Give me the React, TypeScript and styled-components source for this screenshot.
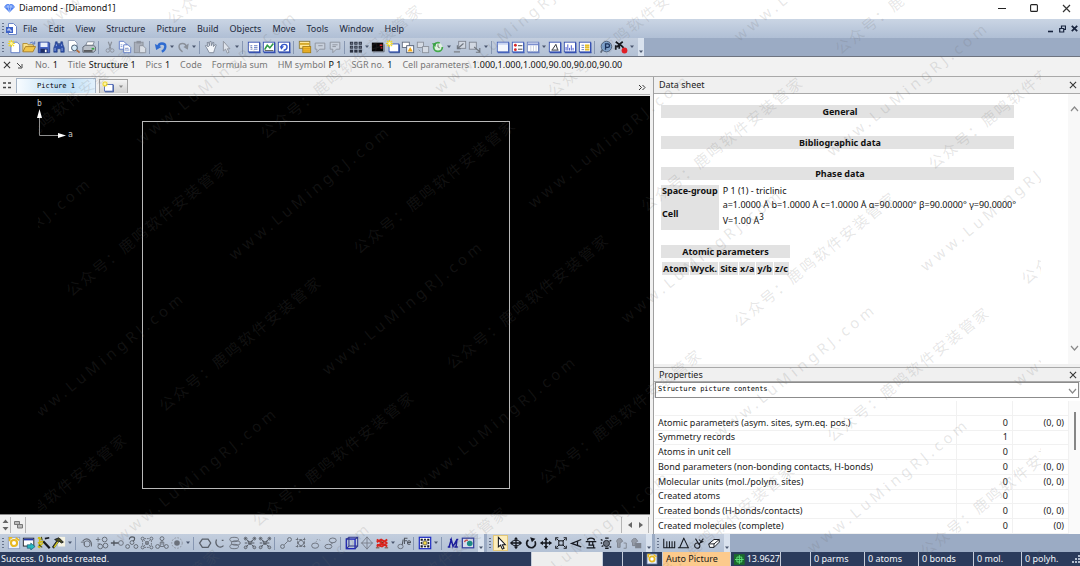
import React from "react";
import styled, { createGlobalStyle, css } from "styled-components";

const ui = `"Noto Sans", "Open Sans", "Noto Sans CJK SC", sans-serif`;
const mono = `"DejaVu Sans Mono", "Liberation Mono", monospace`;

const Global = createGlobalStyle`
  *, *::before, *::after { box-sizing: border-box; }
  html, body, #root { height: 100%; }
  body { margin: 0; overflow: hidden; font: 9px/12px ${ui}; color: #1c1c1c; background: #f0f0f0; }
  button, select { font: inherit; color: inherit; margin: 0; padding: 0; border: 0; background: none; }
  svg { display: block; }
`;

/* ---------- icons ---------- */

const B = "#3550b0";
const N = "#1f3f8f";
const G = "#8a909a";
const Y = "#f5d94a";
const K = "#15181f";

const Win = ({ c = B, fill = "#fff" }: { c?: string; fill?: string }) => (
  <>
    <rect x="1.5" y="2.5" width="13" height="11" fill={fill} stroke={c} />
    <path d="M2 14.5h13.5M14.5 3v11" stroke={c} strokeWidth="1.5" fill="none" />
  </>
);
const Star = ({ x = 4, y = 4 }: { x?: number; y?: number }) => (
  <g transform={`translate(${x} ${y})`}>
    <path d="M0-4V4M-4 0H4M-3-3L3 3M-3 3L3-3" stroke="#f2d824" strokeWidth="1.4" />
    <circle r="1.6" fill="#fff6a0" />
  </g>
);
const Page = ({ x = 3, y = 1, w = 10, h = 13, c = "#5674c4", fill = "#fff" }: { x?: number; y?: number; w?: number; h?: number; c?: string; fill?: string }) => (
  <path d={`M${x + 0.5} ${y + 0.5}h${w - 4}l3 3v${h - 4}h-${w - 1}z`} fill={fill} stroke={c} />
);
const Rings = ({ pts, r = 2.2 }: { pts: number[][]; r?: number }) => (
  <>
    {pts.map(([x, y]) => (
      <circle key={`${x}-${y}`} cx={x} cy={y} r={r} fill="none" stroke="#666c76" strokeWidth="1.1" />
    ))}
  </>
);

const art: Record<string, React.ReactNode> = {
  newDoc: <><Page x={4} y={2} w={11} h={13} /><Star x={5} y={4} /></>,
  open: <><path d="M1 13V4h5l1 1.5h6V8" fill="#f7e08a" stroke="#b08a2a" /><path d="M1 13.5L4 7.5h11.5L12.5 13.5z" fill="#f2c64b" stroke="#a87d22" /><path d="M9 3.5q3-2.5 5 .5M14.5 1.5v3h-3" stroke="#5272c0" fill="none" /></>,
  save: <><path d="M1.5 2.5h12l1 1v11h-13z" fill="#4a66c4" stroke="#27408f" /><rect x="4" y="3" width="8" height="5" fill="#e8eefb" /><rect x="4" y="10" width="8" height="4.5" fill="#1d2d66" /><rect x="9" y="11" width="2" height="3" fill="#fff" /></>,
  find: <><path d="M4 2h2v2h1.5v2h1V4H10V2h2l.5 3 1.500 4v5H10v-4H6v4H2V9l1.500-4z" fill="#2d4ea8" stroke="#1b3678" strokeWidth=".6" /><path d="M3.500 9v3.500M11.500 9v3.500M5 5v2M11 5v2" stroke="#9db4ea" /></>,
  preview: <><Page x={1} y={0} w={11} h={14} c="#8594b0" /><circle cx="8.5" cy="9" r="3.3" fill="#d7ebf8" stroke="#33475f" /><path d="M11 11.5l3.5 3" stroke="#b06a3a" strokeWidth="2" /></>,
  print: <><path d="M4 7l2-5h8l-2 5z" fill="#fff" stroke="#7c8797" /><path d="M1 8l3-2h9l2.5 2v4l-2.5 2H1z" fill="#b9bfc8" stroke="#5c6470" /><path d="M2 12.5h10" stroke="#333" strokeWidth="1.5" /><path d="M11 10h3" stroke="#35a745" strokeWidth="2" /></>,
  cut: <><path d="M6 2l3 8M10 2L7 10" stroke={G} strokeWidth="1.3" /><circle cx="5.5" cy="12" r="2" fill="none" stroke={G} /><circle cx="10.5" cy="12" r="2" fill="none" stroke={G} /></>,
  copy: <><Page x={1} y={1} w={9} h={10} /><Page x={6} y={5} w={9} h={10} /><path d="M8 9.5h4M8 11.5h5M3 5.5h2M3 7.5h2" stroke="#7c96da" /></>,
  paste: <><rect x="1.5" y="2.5" width="10" height="12" fill="#a9afba" stroke={G} /><rect x="4" y="1" width="5" height="3" fill="#8b919c" /><Page x={7} y={6} w={8} h={9} c={G} fill="#dadfe6" /></>,
  undo: <><path d="M4.500 8q1-4 4.500-4 4 0 4 3.500 0 3.500-4 6" fill="none" stroke="#2f6bd0" strokeWidth="2.600" /><path d="M1 4.500l1.500 7 6-3.500z" fill="#2f6bd0" /></>,
  redo: <><path d="M12 8q-1-4-4.5-4-4 0-4 3.5 0 3.5 4 6" fill="none" stroke={G} strokeWidth="1.7" /><path d="M14.5 4l-1 7-5-3z" fill={G} /></>,
  hand: <path d="M3 9L1.5 6.5 3 6l2 2-1.5-5L5 2.5l1.5 4V2L8 1.5l.7 5L10 2.5l1.3.5-.5 4.5L13 5l1 .5L12 11l-1 3.5H6z" fill="#f3f6fa" stroke="#788294" />,
  pointerGray: <path d="M5 1.5v11l2.5-2 2 4.5 2-1-2-4h3z" fill="#dfe4ec" stroke={G} />,
  winTable: <><Win /><path d="M4 6.5h2M4 8.5h2M4 10.5h2M8 6.5h4M8 8.5h4M8 10.5h4" stroke="#5a74bd" /></>,
  winGreen: <><Win /><path d="M3 11l3-5 3 3 4-5" stroke="#2e9a45" strokeWidth="1.8" fill="none" /><path d="M3 12h10" stroke="#555" /></>,
  winUndo: <><Win /><path d="M5 8q0-3 3.5-3 3 0 3 3 0 3-4 4" stroke="#3557c9" strokeWidth="1.6" fill="none" /><path d="M3 7l5 0-3 4z" fill="#3557c9" /></>,
  lock: <><rect x="1.5" y="1.5" width="12" height="8" fill="#ffe89a" stroke="#8a7a3a" /><path d="M2 4.5h11" stroke="#d2a525" strokeWidth="2" /><rect x="5.5" y="7.5" width="9" height="7" fill="#f3bd2c" stroke="#a57c12" /><path d="M6 10h8M6 12.5h8" stroke="#d2941a" /></>,
  flagGray: <><path d="M2.5 3.5h11v7h-6l-3 3.5V10.5h-2z" fill="#c8d0dc" stroke={G} /><path d="M6 6.5h5" stroke={G} /></>,
  flagGray2: <><path d="M2.5 2.5h11v8h-4l-4 4v-4h-3z" fill="#c8d0dc" stroke={G} /><path d="M5 5.5h6M5 7.5h4" stroke={G} /></>,
  grid: <>{[1, 6, 11].map((x) => [2, 6.5, 11].map((y) => <rect key={`${x}${y}`} x={x} y={y} width="3.8" height="3.4" fill="#2a3140" />))}<path d="M2 3.7h2M7 3.7h2M12 3.7h2M2 8.2h2M7 8.2h2M12 8.2h2" stroke="#9ba5b7" strokeWidth=".8" /></>,
  blackPic: <><rect x="1" y="3" width="13" height="10" fill="#08080a" /><path d="M2 13.5h13V5" stroke="#60656e" fill="none" /><path d="M10 6h3M11 9h2" stroke="#d4262c" strokeWidth="1.5" /></>,
  newPic: <><rect x="3.5" y="4.5" width="11" height="9" fill="#fff" stroke={B} /><path d="M4 14.5h11.5V5" stroke={N} fill="none" /><Star x={4} y={4} /></>,
  copyPic: <><rect x="1.5" y="2.5" width="8" height="6" fill="#fff" stroke="#606b7d" /><rect x="6.5" y="6.5" width="8" height="8" fill="#fff" stroke="#4d5a70" /><path d="M10.5 8l3 5h-6z" fill="#f0a81c" /></>,
  copyGray: <><rect x="1.5" y="2.5" width="7" height="6" fill="#d5dbe4" stroke={G} /><rect x="7.5" y="7.5" width="7" height="7" fill="#d5dbe4" stroke={G} /><path d="M3 11l2 2" stroke={G} /></>,
  refresh: <><circle cx="8" cy="8" r="5" fill="#dff3df" stroke="#44a94c" strokeWidth="2" strokeDasharray="25 7" /><path d="M1 4l5-1-1 5z" fill="#3aa044" /><path d="M8 5v3l2 1" stroke="#666" fill="none" /></>,
  exportA: <><rect x="6.5" y="1.5" width="8" height="8" fill="#d2d8e2" stroke="#7d838e" /><path d="M12 4L5 10M5 6v4h4" stroke="#70767f" fill="none" strokeWidth="1.3" /><path d="M1 13.5h7" stroke={G} strokeWidth="2" /></>,
  exportB: <><rect x="1.5" y="2.5" width="8" height="8" fill="#d2d8e2" stroke="#7d838e" /><path d="M7 8l6 5M13.5 9v5H9" stroke="#70767f" fill="none" strokeWidth="1.3" /></>,
  winPlain: <><Win c="#4562bb" fill="#f4f7fd" /><path d="M2 4.5h12" stroke="#9bb1e6" /></>,
  winBullets: <><Win c="#4562bb" /><circle cx="5" cy="6" r="1.6" fill="#d92a2a" /><circle cx="5" cy="11" r="1.6" fill="#d92a2a" /><path d="M8 6.5h5M8 10.5h5" stroke="#333" /></>,
  winCols: <><Win c="#6a80c0" /><path d="M2 5h12" stroke="#7b8fd0" strokeWidth="2" /><path d="M5.5 6v7M8.5 6v7M11.5 6v7" stroke="#c6cede" /></>,
  winAngle: <><Win /><path d="M4 11.5h8M5 11l4-6 2 6" stroke={K} fill="none" /></>,
  winBars: <><Win /><path d="M3.5 12V8M5.5 12V5M7.5 12V9M9.5 12V6M11.5 12V9" stroke="#3448c8" /></>,
  winForm: <><Win /><path d="M4 6h3M4 8.5h3M4 11h3" stroke="#5a74bd" /><path d="M8 6h5M8 8.5h5M8 11h5" stroke="#e5bd25" strokeWidth="2" /></>,
  pBall: <><circle cx="8.5" cy="7.5" r="6" fill="#7fa4d0" stroke="#4c5e78" /><path d="M7.5 11V4.5h2.5q2 0 2 2t-2 2H7.5" stroke="#142c58" fill="none" strokeWidth="1.5" /><path d="M4 11l-2 3.5" stroke="#5d6878" strokeWidth="2" /></>,
  tools: <><path d="M2 2l4 3 4-3M3 8l4-3 4 4M2 11V6M6 5v5" stroke={K} strokeWidth="2" fill="none" /><circle cx="12" cy="12" r="3.3" fill="#e01f26" /></>,

  sun: <><rect x="1.5" y="1.5" width="13" height="13" fill="#e9f0fb" stroke="#8b9cc2" /><circle cx="8" cy="8" r="3.5" fill="#fff" stroke="#e8b922" strokeWidth="2.4" /><path d="M10 2l4 3M3 6V2h3" stroke="#e8b922" strokeWidth="2" fill="none" /></>,
  arrowWin: <><rect x="1.5" y="2.5" width="12" height="9" fill="#fff" stroke={K} /><path d="M2 4h11" stroke="#2438a8" strokeWidth="2" /><path d="M6 10h4V8l5 4-5 4v-2H6z" fill="#25b7bd" stroke="#124f72" strokeWidth=".7" /></>,
  wand: <><path d="M7 6l7.5 8" stroke={K} strokeWidth="2.6" /><path d="M9 3l5-1" stroke={K} strokeWidth="2" /><path d="M1 2l4 2M3 1v13M1 8l6-2M1 13l6-5" stroke="#cdbb10" strokeWidth="1.8" /><path d="M5 1l1 4M2 10l4 3" stroke="#4b4b10" strokeWidth="1.2" /></>,
  hammer: <><path d="M7 1h8v11H7z" fill="#f6f4e4" /><path d="M3 4l5-2 5 5-2 1-3-2-6 8-1.5-1.5 5-7z" fill="#494a20" stroke={K} /><path d="M2.5 13l4-6" stroke="#ded224" strokeWidth="1.4" /></>,
  ringA: <><path d="M3 6q3-4 7-2 4 3 3 8" fill="none" stroke="#666c76" strokeWidth="1.3" /><circle cx="8" cy="9" r="3.5" fill="none" stroke="#666c76" /><path d="M1 7h4v4" fill="none" stroke="#666c76" /></>,
  ringB: <><Rings pts={[[11, 4], [6, 12], [12, 11]]} r={2.7} /><path d="M1 4h5M3.5 1.5v5M3 9l3 0" stroke="#666c76" /></>,
  plusO: <><path d="M1 8h9M4.5 5v6" stroke="#50565f" strokeWidth="1.5" /><circle cx="12.5" cy="8" r="2.7" fill="none" stroke="#666c76" /></>,
  tree: <><Rings pts={[[3, 12], [12.5, 12], [8, 7.5]]} /><path d="M5 4q0-3 3-3t3 2-2 3" stroke="#50565f" fill="none" strokeWidth="1.3" /></>,
  net: <><Rings pts={[[3, 3], [13, 3], [3, 13], [13, 13], [8, 8]]} r={1.7} /><path d="M4 4l8 8M12 4l-8 8M5 3h6M5 13h6M3 5v6M13 5v6" stroke="#666c76" strokeDasharray="2 1" /></>,
  mol: <><Rings pts={[[8, 3], [3, 12], [13, 12]]} /><path d="M8 5v5M6 7h4v5H6z" stroke="#666c76" fill="none" /></>,
  target: <><circle cx="8" cy="8" r="6" fill="none" stroke={G} strokeDasharray="2 1.5" /><circle cx="8" cy="8" r="3.2" fill="#6b717b" /></>,
  hex: <path d="M5 3.5h6.5l3 4.5-3 5H5L1.800 8z" fill="none" stroke="#5a606a" strokeWidth="1.5" />,
  arc: <path d="M4 4q-2 5 2 8 3 2 6-1M10 5h2" fill="none" stroke="#5a606a" strokeWidth="1.4" />,
  stack: <><ellipse cx="7" cy="4" rx="5" ry="2.5" fill="none" stroke="#666c76" /><ellipse cx="9" cy="8" rx="5" ry="2.5" fill="none" stroke="#666c76" /><ellipse cx="7" cy="12" rx="5" ry="2.5" fill="none" stroke="#666c76" /></>,
  lattice: <><path d="M2 2l12 12M14 2L2 14M2 8h12" stroke="#555b65" strokeWidth="1.4" strokeDasharray="3 1" /><Rings pts={[[3, 3], [13, 3], [3, 13], [13, 13], [8, 8]]} r={1.6} /></>,
  bond: <><Rings pts={[[4, 12], [12, 4]]} /><path d="M6 10l4-4" stroke="#666c76" /></>,
  net2: <><path d="M2 4h12M2 12h12M4 2v12M12 2v12" stroke="#666c76" strokeDasharray="3 1" /><circle cx="8" cy="8" r="3" fill="none" stroke="#666c76" /></>,
  drop: <><ellipse cx="7" cy="11" rx="4" ry="3" fill="none" stroke="#666c76" /><path d="M8 7l2-4M12 4l1 2" stroke={G} strokeDasharray="1.5 1" /></>,
  drop2: <><ellipse cx="5" cy="12" rx="4" ry="2.5" fill="none" stroke="#666c76" /><ellipse cx="10" cy="5" rx="4" ry="2.7" fill="none" stroke="#666c76" /><path d="M7 10l3-2" stroke="#666c76" /></>,
  cube: <><rect x="1.5" y="3.5" width="10" height="11" fill="none" stroke="#2127b8" strokeWidth="1.6" /><path d="M4.5 11.5v-10h10v10zM1.5 3.5l3-2M11.5 3.5l3-2M11.5 14.5l3-3M1.5 14.5l3-3" fill="none" stroke="#30378c" strokeWidth="1.2" /></>,
  octa: <><path d="M8 1l6 7-6 7-6-7z" fill="none" stroke="#777d88" /><path d="M8 1v14M1 8h14" stroke="#777d88" /></>,
  redX: <><path d="M2 4l12 8M14 4L2 12M2 7l5-3 7 4M2 10l6 2 6-4" stroke="#d9231c" strokeWidth="2.2" fill="none" /><path d="M1 13.5h4M11 13.5h4M7 6l2 2" stroke="#6b3816" /></>,
  fe: <><ellipse cx="4" cy="12" rx="3" ry="2.5" fill="none" stroke="#666c76" /><path d="M6 10l1-6M8.5 9V2.5h3.5M8.5 5.5h3M12 7.5h3.5q0-2-1.7-2t-1.8 2 1.8 2h1.5" stroke="#50565f" fill="none" strokeWidth="1.2" /></>,
  fit: <><rect x="1.5" y="1.5" width="13" height="13" fill="#fff" stroke="#1d2cc4" strokeWidth="1.4" /><path d="M8 2.500l2 2.500H6zM8 13.500l2-2.500H6zM2.500 8L5 6v4zM13.500 8L11 6v4zM3 3h2.500v2.500H3zM10.500 3H13v2.500h-2.500zM3 10.500h2.500V13H3zM10.500 10.500H13V13h-2.500z" fill={K} /><circle cx="8" cy="8" r="2.3" fill={Y} stroke={K} strokeWidth=".6" /></>,
  emM: <path d="M2 12.5h3M9.5 12.5h4M3.5 12.5L6 4l2 8 4.500-8-1 8.5M4.500 4h2M12 4h2" stroke="#1a1c9e" strokeWidth="1.700" fill="none" />,
  picTeal: <><rect x="1.5" y="2.5" width="13" height="11" fill="#d6dcec" stroke="#303c9c" strokeWidth="1.4" /><circle cx="10" cy="8.5" r="3.2" fill="#178c86" /><path d="M4 7q1-3 4-2" stroke="#c54a4a" fill="none" strokeWidth="1.5" /></>,

  arrow: <path d="M5 1.5v11l2.5-2 2 4.5 2-1-2-4h3.5z" fill="#fff" stroke={K} strokeWidth="1.2" />,
  orbit: <><path d="M8 1l2.5 3h-5zM8 15l2.5-3h-5zM1 8l3-2.5v5zM15 8l-3-2.5v5z" fill={K} /><path d="M8 3v10M3 8h10" stroke={K} strokeWidth="1.5" /><ellipse cx="8" cy="8" rx="5" ry="3" fill="none" stroke={K} strokeWidth="1.1" /></>,
  rotate: <><path d="M5 4.500q-3 2.500-1.500 6 2.500 4 7 2.500 4-2.500 2-7" fill="none" stroke={K} strokeWidth="1.900" /><path d="M7 1.500l6 1.500-4 4z" fill={K} /></>,
  move: <><path d="M8 1l2.500 3.500h-5zM8 15l2.500-3.500h-5zM1 8l3.500-2.500v5zM15 8l-3.500-2.500v5z" fill={K} /><path d="M8 3v10M3 8h10" stroke={K} strokeWidth="1.800" /></>,
  zoomBox: <><path d="M2 5V2h3M11 2h3v3M14 11v3h-3M5 14H2v-3" fill="none" stroke={K} strokeWidth="1.3" /><path d="M3 3l3 3M13 3l-3 3M3 13l3-3M13 13l-3-3" stroke={K} strokeWidth="1.1" /><rect x="5.5" y="5.5" width="5" height="5" fill="none" stroke={K} strokeWidth="1.2" /></>,
  persp: <path d="M14 4L3 8.500l11 4M10 6q-1 2.500 0 5" fill="none" stroke={K} strokeWidth="1.500" />,
  stamp: <><path d="M4 5q0-2.500 4-2.500T12 5M2 6.500h12M6 7v4M10 7v4M3 13.500h10M5 10.500h6v3" fill="none" stroke={K} strokeWidth="1.400" /></>,
  spin: <><circle cx="8.5" cy="8.5" r="3.500" fill="#6d7480" stroke={K} /><path d="M2 4l2 1M3 12l2-1M14 5l-2 1M12 12l2 1M2 8h1.5M7 2.500h4M7 14h4" stroke={K} strokeWidth="1.5" /></>,
  walkA: <><path d="M3 6q1-4 5-3l2 3-3 2v5H4V8z" fill="#959ba6" stroke="#7b818c" /><path d="M11 8h3v6h-3" stroke="#7b818c" fill="none" /></>,
  walkB: <><path d="M3 6q1-4 5-3l2 3-3 2v3H4V8z" fill="#959ba6" stroke="#7b818c" /><rect x="7" y="8" width="7" height="6" fill="#7d838e" /></>,
  dist: <path d="M2 3v10.5h13M5.5 6v7M8.5 6v7M11.5 6v7M14.5 6v7" fill="none" stroke={K} strokeWidth="1.2" />,
  tri: <path d="M8 2L3 13.5h10L8 3M1 13.5h3" fill="none" stroke={K} strokeWidth="1.2" />,
  tors: <><circle cx="6" cy="11" r="3" fill="none" stroke={K} strokeWidth="1.2" /><path d="M4 3l3 5M13 3L7.500 10M9 8l4-2M8 4l2 2" stroke={K} strokeWidth="1.2" /></>,
  plane: <path d="M2 9l6-5h6v3l-6 6H3zM2 9h6v4M8 9l6-5" fill="#fff" stroke={K} strokeWidth="1.1" />,
};

const Icon = ({ name, size = 14 }: { name: string; size?: number }) => (
  <svg width={size} height={size} viewBox="0 0 16 16" fill="none" aria-hidden="true">{art[name]}</svg>
);

/* ---------- page ---------- */

const Frame = styled.div`
  position: relative;
  display: flex;
  flex-direction: column;
  height: 100%;
  overflow: hidden;
`;

const TitleBar = styled.header`
  display: flex;
  align-items: center;
  flex: none;
  height: 19px;
  padding: 0 8px 3px 4px;
  gap: 4px;
  background: #fff;
  color: #111;
`;
const TitleText = styled.h1`
  flex: 1;
  margin: 0;
  font: inherit;
`;
const WindowButtons = styled.div`
  display: flex;
  gap: 20px;
`;
const GlyphButton = styled.button`
  display: grid;
  place-items: center;
  width: 12px;
  height: 12px;
`;

const MenuBar = styled.nav`
  display: flex;
  align-items: center;
  flex: none;
  height: 19px;
  background: linear-gradient(#cad5e4, #b0bfd5);
`;
const MenuList = styled.div`
  display: flex;
  gap: 11px;
  padding-left: 6px;
`;
const MenuItem = styled.button`
  line-height: 16px;
  color: #1e2a40;
`;
const Spacer = styled.div`
  flex: 1;
`;
const ChildButtons = styled.div`
  display: flex;
  color: #17233d;
`;

const ToolDock = styled.div<{ $edge?: boolean }>`
  display: flex;
  flex: none;
  height: ${(p) => (p.$edge ? 19 : 18)}px;
  gap: 3px;
  background: #9babc4;
  ${(p) => p.$edge && css`border-bottom: 1px solid #6e7480;`}
`;
const Strip = styled.div`
  display: flex;
  align-items: center;
  background: linear-gradient(#c3cede, #b3c1d5);
`;
const Grip = styled.span`
  width: 2px;
  height: 11px;
  margin: 0 2px;
  background: repeating-linear-gradient(#66728a 0 1px, transparent 1px 3px);
`;
const ToolButton = styled.button<{ $on?: boolean }>`
  display: grid;
  place-items: center;
  width: 15px;
  height: 16px;
  ${(p) => p.$on && css`background: #fdeebb; outline: 1px solid #e2c778; outline-offset: -1px;`}
`;
const DropArrow = styled.button`
  display: grid;
  place-items: center;
  width: 7px;
  height: 16px;
`;
const Divider = styled.span`
  width: 1px;
  height: 13px;
  margin: 0 3px 0 2px;
  background: #8797b2;
`;
const StripEnd = styled.span`
  align-self: stretch;
  display: flex;
  align-items: flex-end;
  justify-content: center;
  width: 6px;
  margin-left: 3px;
  padding-bottom: 1px;
  background: #d9e2ee;
`;

const InfoBar = styled.div`
  display: flex;
  align-items: center;
  flex: none;
  height: 20px;
  padding: 0 2px 3px 1px;
  background: #f2f2f2;
  border-bottom: 1px solid #a9a9a9;
`;
const InfoList = styled.dl`
  display: flex;
  gap: 10px;
  margin: 0 0 0 10px;
`;
const InfoItem = styled.div`
  display: flex;
  gap: 3px;
  white-space: nowrap;
  dt { color: #777; }
  dd { margin: 0; color: #111; }
`;

const Workspace = styled.main`
  display: grid;
  grid-template-columns: minmax(0, 650fr) minmax(0, 430fr);
  flex: 1;
  min-height: 0;
`;
const Editor = styled.section`
  display: flex;
  flex-direction: column;
  min-height: 0;
`;
const TabRow = styled.div`
  display: flex;
  align-items: flex-end;
  flex: none;
  height: 18px;
  padding: 0 2px 1px 3px;
  background: #f1f1f1;
  border-bottom: 1px solid #b4b4b4;
`;
const TabGrip = styled.span`
  align-self: center;
  margin-right: 5px;
`;
const Tab = styled.button`
  width: 80px;
  height: 15px;
  border: 1px solid #a5b4c6;
  border-bottom: 0;
  background: linear-gradient(to right, #f8fcff, #b9dcf5 60%, #e2f1fc);
  font: 7px/14px ${mono};
  color: #000;
`;
const NewTab = styled.button`
  display: flex;
  align-items: center;
  gap: 4px;
  height: 14px;
  margin-left: 3px;
  padding: 0 3px 0 2px;
  border: 1px solid #a3a3a3;
  border-bottom: 0;
  background: linear-gradient(#f4f4f4, #d0d0d0);
`;
const Canvas = styled.div`
  position: relative;
  display: flex;
  align-items: center;
  justify-content: center;
  flex: 1;
  min-height: 0;
  margin-top: 1px;
  padding-left: 2px;
  background: #000;
`;
const UnitCell = styled.div`
  height: 88%;
  aspect-ratio: 1;
  border: 1px solid #b9b9b9;
`;
const Axes = styled.svg`
  position: absolute;
  left: 34px;
  top: 2px;
  text { font: 8px ${mono}; fill: #c8c8c8; }
`;
const ScrollRow = styled.div`
  display: flex;
  flex: none;
  height: 20px;
  padding: 2px 0 1px;
  background: #f1f1f1;
  border-top: 1px solid #8a8a8a;
`;
const ScrollCell = styled.div<{ $grow?: boolean; $w?: number }>`
  display: flex;
  align-items: center;
  justify-content: center;
  gap: 7px;
  ${(p) => (p.$grow ? css`flex: 1;` : css`width: ${p.$w}px;`)}
  border-right: 1px solid #b5b5b5;
  margin-right: 1px;
`;

const Side = styled.aside`
  display: flex;
  flex-direction: column;
  min-width: 0;
  min-height: 0;
  margin-left: 3px;
  border-left: 1px solid #a0a0a0;
  background: #f0f0f0;
`;
const PanelHead = styled.header<{ $h: number }>`
  display: flex;
  align-items: center;
  justify-content: space-between;
  flex: none;
  height: ${(p) => p.$h}px;
  padding: 0 1px 0 5px;
  background: #f0f0f0;
  border-bottom: 1px solid #a9a9a9;
  h2 { margin: 0; font: inherit; }
`;
const SheetView = styled.div`
  display: flex;
  justify-content: space-between;
  flex: 1;
  min-height: 0;
  overflow: hidden;
  background: #fff;
`;
const SheetDoc = styled.div`
  width: 353px;
  margin: 11px 0 0 7px;
  color: #111;
`;
const Band = styled.h3<{ $last?: boolean }>`
  margin: 0 0 ${(p) => (p.$last ? 5 : 18)}px;
  padding-left: 5px;
  font-size: 9px;
  line-height: 13px;
  text-align: center;
  background: #e2e2e2;
`;
const FactTable = styled.table`
  border-collapse: separate;
  border-spacing: 0;
  white-space: nowrap;
  th {
    width: 58px;
    padding: 0 1px;
    text-align: left;
    background: #e2e2e2;
  }
  td { padding: 0 0 0 4px; }
  tr + tr { line-height: 16px; }
  tr + tr td { padding-bottom: 1px; }
  sup { font-size: 8px; line-height: 8px; }
`;
const AtomTable = styled.table`
  margin-top: 15px;
  border-collapse: separate;
  border-spacing: 1px 0;
  white-space: nowrap;
  caption { background: #e2e2e2; font-weight: 700; line-height: 13px; margin-bottom: 4px; }
  th { padding: 0 1px; background: #e2e2e2; line-height: 13px; }
`;
const SheetScroll = styled.div`
  display: flex;
  flex-direction: column;
  justify-content: space-between;
  align-items: center;
  width: 12px;
  padding: 12px 0 13px;
  background: #f8f8f8;
`;

const PropHead = styled(PanelHead)`
  margin-top: 3px;
  border-top: 1px solid #a9a9a9;
`;
const Picker = styled.label`
  position: relative;
  display: flex;
  flex: none;
  margin: 0 1px;
  select {
    flex: 1;
    height: 16px;
    padding: 0 2px 2px;
    border: 1px solid #8c8c8c;
    background: #fff;
    appearance: none;
    font: 7px/12px ${mono};
    color: #000;
  }
  svg { position: absolute; right: 2px; top: 6px; pointer-events: none; }
`;
const PropView = styled.div`
  display: flex;
  flex: none;
  height: 136px;
  padding: 3px 0 0 1px;
  background: #fff;
`;
const PropTable = styled.table`
  flex: 1;
  height: 133px;
  border-collapse: separate;
  border-spacing: 0;
  th, td {
    padding: 0 4px 0 3px;
    border-bottom: 1px solid #f1f1f1;
    border-right: 1px solid #f1f1f1;
    font-weight: 400;
    text-align: left;
    line-height: 12px;
    white-space: nowrap;
  }
  td { width: 56px; text-align: right; }
`;
const PropScroll = styled.div`
  width: 11px;
  padding: 11px 0 0 5px;
  background: #fafafa;
  &::before {
    content: "";
    display: block;
    width: 2px;
    height: 38px;
    background: #868686;
  }
`;

const StatusBar = styled.footer`
  display: flex;
  align-items: center;
  flex: none;
  height: 14px;
  background: #2b3b5c;
  color: #f2f5fa;
  white-space: nowrap;
`;
const StatusMessage = styled.output`
  flex: 1;
  padding-left: 1px;
`;
const StatusCell = styled.div<{ $w: number; $tone?: "gray" | "orange" }>`
  display: flex;
  align-items: center;
  gap: 2px;
  align-self: stretch;
  width: ${(p) => p.$w}px;
  padding-left: 3px;
  border-left: 1px solid #c4ccda;
  ${(p) => p.$tone === "gray" && css`background: #eeeeee;`}
  ${(p) => p.$tone === "orange" && css`background: #fcca8c; color: #1a1a1a;`}
`;

const MarkLayer = styled.div`
  position: absolute;
  inset: 0 39px 0 38px;
  overflow: hidden;
  pointer-events: none;
`;
const MarkSheet = styled.div`
  width: max-content;
  transform-origin: 0 0;
  transform: rotate(-39deg) translate(-572px, -13px);
  color: rgba(105, 105, 105, 0.17);
  font: 15px/74px ${ui};
`;
const MarkRow = styled.div<{ $cn?: boolean }>`
  display: flex;
  height: 74px;
  padding-left: ${(p) => (p.$cn ? 138 : 0)}px;
  letter-spacing: ${(p) => (p.$cn ? 2 : 4)}px;
  span { width: ${(p) => (p.$cn ? 250 : 265)}px; text-align: center; white-space: nowrap; }
`;

/* ---------- content ---------- */

const Cross = ({ c = "#333", s = 9, w = 1.2 }: { c?: string; s?: number; w?: number }) => (
  <svg width={s} height={s} viewBox="0 0 9 9" aria-hidden="true"><path d="M1 1l7 7M8 1L1 8" stroke={c} strokeWidth={w} /></svg>
);
const Chevron = ({ up }: { up?: boolean }) => (
  <svg width="9" height="6" viewBox="0 0 9 6" aria-hidden="true"><path d={up ? "M1 5l3.5-4L8 5" : "M1 1l3.5 4L8 1"} fill="none" stroke="#8a8a8a" strokeWidth="1.2" /></svg>
);
const Triangle = ({ c = "#4a566e" }: { c?: string }) => (
  <svg width="6" height="6" viewBox="-1 -1 6 6" aria-hidden="true"><path d="M0 0.500h4L2 3z" fill={c} /></svg>
);

const mainTools =
  "newDoc open save find preview print | cut copy paste | undo > redo > | hand pointerGray > | winTable winGreen winUndo | lock flagGray flagGray2 | grid > blackPic newPic copyPic copyGray refresh > exportA exportB > | winPlain winBullets winCols > winAngle winBars winForm | pBall tools >";
const buildTools =
  "sun arrowWin wand hammer > | ringA ringB plusO tree net mol target > | hex arc stack lattice lattice | bond net2 drop drop2 | cube octa redX > fe | fit > | emM picTeal";
const moveTools = "arrow orbit rotate move zoomBox persp stamp spin walkA walkB";
const measureTools = "dist tri tors plane";

const ToolStrip = ({ items, selected }: { items: string; selected?: string }) => (
  <Strip role="toolbar">
    <Grip />
    {items.split(" ").map((name, i) => {
      if (name === "|") return <Divider key={i} />;
      if (name === ">") return <DropArrow key={i} aria-label="More"><Triangle /></DropArrow>;
      return <ToolButton key={i} aria-label={name} $on={name === selected}><Icon name={name} /></ToolButton>;
    })}
    <StripEnd><Triangle /></StripEnd>
  </Strip>
);

const menus = ["File", "Edit", "View", "Structure", "Picture", "Build", "Objects", "Move", "Tools", "Window", "Help"];
const info = [
  ["No.", "1"], ["Title", "Structure 1"], ["Pics", "1"], ["Code", ""], ["Formula sum", ""],
  ["HM symbol", "P 1"], ["SGR no.", "1"], ["Cell parameters", "1.000,1.000,1.000,90.00,90.00,90.00"],
];
const props = [
  ["Atomic parameters (asym. sites, sym.eq. pos.)", "0", "(0, 0)"],
  ["Symmetry records", "1", ""],
  ["Atoms in unit cell", "0", ""],
  ["Bond parameters (non-bonding contacts, H-bonds)", "0", "(0, 0)"],
  ["Molecular units (mol./polym. sites)", "0", "(0, 0)"],
  ["Created atoms", "0", ""],
  ["Created bonds (H-bonds/contacts)", "0", "(0, 0)"],
  ["Created molecules (complete)", "0", "(0)"],
];

/* The tilted sheet is wider than the window: only marks that reach it carry text. */
const tilt = (39 * Math.PI) / 180;
const markRows = Array.from({ length: 15 }, (_, row) => {
  const cn = row % 2 === 1;
  return Array.from({ length: 5 }, (_, col) => {
    const u = -572 + (cn ? 138 + (col + 0.5) * 250 : (col + 0.5) * 265);
    const v = row * 74 + 24;
    const x = u * Math.cos(tilt) + v * Math.sin(tilt);
    const y = v * Math.cos(tilt) - u * Math.sin(tilt);
    const seen = x > -75 && x < 1078 && y > -60 && y < 626;
    if (!seen) return "";
    return cn ? "公众号：鹿鸣软件安装管家" : "www.LuMingRJ.com";
  });
});

export default function App() {
  return (
    <>
      <Global />
      <Frame>
        <TitleBar>
          <svg width="11" height="10" viewBox="0 0 11 10" aria-hidden="true">
            <path d="M2.5 1h6L11 4 5.500 9.500 0 4z" fill="#4a7df0" />
            <path d="M0 4h11M2.5 1L4 4l1.5 5.5L7 4l1.500-3M4 4l1.500-3L7 4" stroke="#bcd4ff" strokeWidth=".7" fill="none" />
          </svg>
          <TitleText>Diamond - [Diamond1]</TitleText>
          <WindowButtons>
            <GlyphButton aria-label="Minimize"><svg width="8" height="8" viewBox="0 0 8 8"><path d="M0 4.500h8" stroke="#222" /></svg></GlyphButton>
            <GlyphButton aria-label="Maximize"><svg width="8" height="8" viewBox="0 0 8 8"><rect x=".6" y=".6" width="6.8" height="6.8" rx="1" fill="none" stroke="#222" strokeWidth="1.1" /></svg></GlyphButton>
            <GlyphButton aria-label="Close"><Cross /></GlyphButton>
          </WindowButtons>
        </TitleBar>

        <MenuBar>
          <Grip />
          <svg width="11" height="12" viewBox="0 0 11 12" aria-hidden="true">
            <path d="M2.500.5h5l3 3v8h-8z" fill="#fff" stroke="#6b86c8" />
            <rect x="0" y="4" width="7" height="6" fill="#3c62c8" />
            <path d="M2 8V6h2v2h2M7.500 10V6" stroke="#fff" fill="none" strokeWidth=".8" />
          </svg>
          <MenuList>{menus.map((m) => <MenuItem key={m}>{m}</MenuItem>)}</MenuList>
          <Spacer />
          <ChildButtons>
            <GlyphButton aria-label="Minimize document"><svg width="7" height="8" viewBox="0 0 7 8"><path d="M1 6.500h5" stroke="currentColor" strokeWidth="1.6" /></svg></GlyphButton>
            <GlyphButton aria-label="Restore document"><svg width="7" height="8" viewBox="0 0 7 8"><path d="M2.500 3V1h4v3.500H5M.7 3.500h4V7h-4z" fill="none" stroke="currentColor" strokeWidth="1.2" /></svg></GlyphButton>
            <GlyphButton aria-label="Close document"><Cross s={7} w={2.2} c="#17233d" /></GlyphButton>
          </ChildButtons>
        </MenuBar>

        <ToolDock $edge><ToolStrip items={mainTools} /></ToolDock>

        <InfoBar>
          <GlyphButton aria-label="Close bar"><Cross s={8} /></GlyphButton>
          <GlyphButton aria-label="Dock bar"><svg width="7" height="7" viewBox="0 0 7 7"><path d="M1 1l4 4M6 2v4H2" stroke="#444" fill="none" /></svg></GlyphButton>
          <InfoList>
            {info.map(([k, v]) => (
              <InfoItem key={k}><dt>{k}</dt>{v && <dd>{v}</dd>}</InfoItem>
            ))}
          </InfoList>
        </InfoBar>

        <Workspace>
          <Editor>
            <TabRow>
              <TabGrip><svg width="8" height="7" viewBox="0 0 8 7"><path d="M0 1h3M5 1h3M0 5.500h3M5 5.500h3" stroke="#444" strokeWidth="1.5" /></svg></TabGrip>
              <Tab>Picture 1</Tab>
              <NewTab aria-label="New picture"><Icon name="newPic" size={12} /><Triangle c="#8a8a8a" /></NewTab>
              <Spacer />
              <GlyphButton aria-label="More tabs"><svg width="8" height="7" viewBox="0 0 8 7"><path d="M1 1l2.500 2.500L1 6M4.500 1L7 3.500 4.500 6" stroke="#333" fill="none" /></svg></GlyphButton>
            </TabRow>
            <Canvas>
              <UnitCell />
              <Axes width="44" height="42" viewBox="0 0 44 42" aria-hidden="true">
                <path d="M5.500 14v23.500H24" stroke="#8f8f8f" fill="none" />
                <path d="M5.500 11l2.500 9H3zM32 37.500l-8-2.500v5z" fill="#fff" />
                <text x="3" y="8">b</text>
                <text x="34" y="39">a</text>
              </Axes>
            </Canvas>
            <ScrollRow>
              <ScrollCell $w={11}><svg width="7" height="12" viewBox="0 0 7 12"><path d="M.5 4L3.500.5l3 3.500zM.5 8h6l-3 3.500z" fill="#666" /></svg></ScrollCell>
              <ScrollCell $w={14}><svg width="9" height="8" viewBox="0 0 9 8"><path d="M.5.500h5v3h-5zM3.500 3.500h5v3.500h-5z" fill="#bbb" stroke="#777" /></svg></ScrollCell>
              <ScrollCell $grow />
              <ScrollCell $w={26}>
                <svg width="4" height="6" viewBox="0 0 4 6"><path d="M4 0v6L0 3z" fill="#666" /></svg>
                <svg width="4" height="6" viewBox="0 0 4 6"><path d="M0 0v6l4-3z" fill="#666" /></svg>
              </ScrollCell>
            </ScrollRow>
          </Editor>

          <Side>
            <PanelHead $h={17}><h2>Data sheet</h2><GlyphButton aria-label="Close data sheet"><Cross s={8} /></GlyphButton></PanelHead>
            <SheetView>
              <SheetDoc>
                <Band>General</Band>
                <Band>Bibliographic data</Band>
                <Band $last>Phase data</Band>
                <FactTable>
                  <tbody>
                    <tr><th scope="row">Space-group</th><td>P 1 (1) - triclinic</td></tr>
                    <tr><th scope="row">Cell</th><td>a=1.0000 Å b=1.0000 Å c=1.0000 Å α=90.0000° β=90.0000° γ=90.0000°<br />V=1.00 Å<sup>3</sup></td></tr>
                  </tbody>
                </FactTable>
                <AtomTable>
                  <caption>Atomic parameters</caption>
                  <thead><tr>{["Atom", "Wyck.", "Site", "x/a", "y/b", "z/c"].map((h) => <th key={h} scope="col">{h}</th>)}</tr></thead>
                </AtomTable>
              </SheetDoc>
              <SheetScroll><Chevron up /><Chevron /></SheetScroll>
            </SheetView>
            <PropHead $h={15}><h2>Properties</h2><GlyphButton aria-label="Close properties"><Cross s={8} /></GlyphButton></PropHead>
            <Picker>
              <select aria-label="Property set" defaultValue="spc"><option value="spc">Structure picture contents</option></select>
              <Chevron />
            </Picker>
            <PropView>
              <PropTable>
                <tbody>
                  <tr aria-hidden="true"><th>&nbsp;</th><td /><td /></tr>
                  {props.map(([name, a, b]) => (
                    <tr key={name}><th scope="row">{name}</th><td>{a}</td><td>{b}</td></tr>
                  ))}
                </tbody>
              </PropTable>
              <PropScroll />
            </PropView>
          </Side>
        </Workspace>

        <ToolDock>
          <ToolStrip items={buildTools} />
          <ToolStrip items={moveTools} selected="arrow" />
          <ToolStrip items={measureTools} />
        </ToolDock>

        <StatusBar>
          <StatusMessage>Success. 0 bonds created.</StatusMessage>
          <StatusCell $w={71} $tone="gray" />
          <StatusCell $w={20} />
          <StatusCell $w={20} />
          <StatusCell $w={20}><Icon name="sun" size={12} /></StatusCell>
          <StatusCell $w={68} $tone="orange">Auto Picture</StatusCell>
          <StatusCell $w={50}>
            <svg width="11" height="11" viewBox="0 0 11 11" aria-hidden="true"><rect width="11" height="11" fill="#1a6b2c" /><path d="M5.500 1v9M1 5.500h9M3 3h5v5H3z" stroke="#5fe07a" fill="none" /></svg>
            13.9627
          </StatusCell>
          <StatusCell $w={30} />
          <StatusCell $w={54}>0 parms</StatusCell>
          <StatusCell $w={54}>0 atoms</StatusCell>
          <StatusCell $w={55}>0 bonds</StatusCell>
          <StatusCell $w={48}>0 mol.</StatusCell>
          <StatusCell $w={51}>0 polyh.</StatusCell>
          <svg width="8" height="8" viewBox="0 0 8 8" aria-hidden="true"><path d="M6 0h2v2H6zM3 3h2v2H3zM6 3h2v2H6zM0 6h2v2H0zM3 6h2v2H3zM6 6h2v2H6z" fill="#b4bed0" /></svg>
        </StatusBar>

        <MarkLayer aria-hidden="true">
          <MarkSheet>
            {markRows.map((marks, row) => (
              <MarkRow key={row} $cn={row % 2 === 1}>
                {marks.map((mark, col) => <span key={col}>{mark}</span>)}
              </MarkRow>
            ))}
          </MarkSheet>
        </MarkLayer>
      </Frame>
    </>
  );
}
